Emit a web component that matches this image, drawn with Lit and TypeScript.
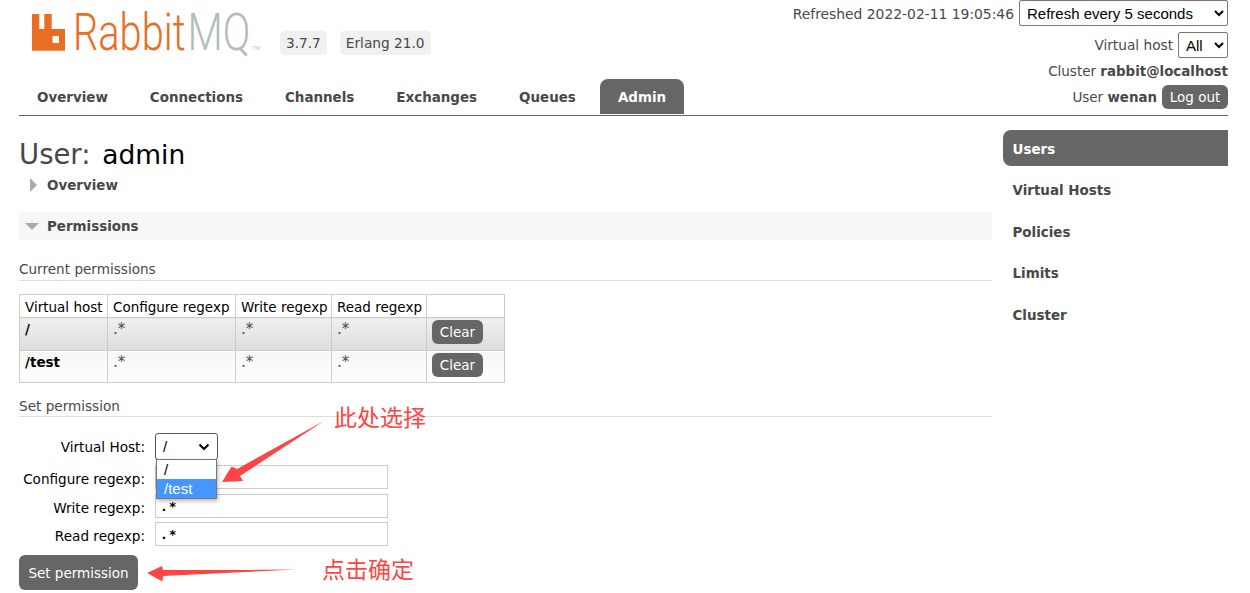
import { LitElement, html, css, svg } from "lit";
import { customElement } from "lit/decorators.js";

const tabs = ["Overview", "Connections", "Channels", "Exchanges", "Queues", "Admin"];
const side = ["Users", "Virtual Hosts", "Policies", "Limits", "Cluster"];
const perms = ["/", "/test"];

const logo = svg`<svg class="logo" width="240" height="64" viewBox="0 -14 240 64">
  <path fill="#e96d24" fill-rule="evenodd" d="M0 0h7.3v15h5V0h7.4v15H33v21.7H0zM20.5 22v7h6.5v-7z"/>
  <text transform="translate(41 36) scale(.78 1)" font-family="Roboto" font-weight="300" font-size="51" fill="#e96d24">Rabbit</text>
  <text transform="translate(155.5 36) scale(.8 1)" font-family="Roboto" font-weight="300" font-size="51" fill="#b2bdb9">MQ</text>
  <text x="221" y="36" font-family="Liberation Sans" font-size="5" fill="#b9c2bf">TM</text>
</svg>`;

@customElement("app-root")
export class AppRoot extends LitElement {
  static styles = css`
    :host { display: block; height: 593px; overflow: hidden; position: relative; background: #fff; color: #484848; font: 13.5px "DejaVu Sans", Verdana, sans-serif; }
    b { font-size: 13.4px; }
    .page { padding: 0 22px 0 19px; }
    header { display: flex; justify-content: space-between; border-bottom: 1px solid #666; height: 115px; }
    .left { display: flex; flex-direction: column; justify-content: space-between; }
    .brand { display: flex; padding: 0 0 0 13px; }
    .logo { display: block; }
    .badges { display: flex; gap: 13px; margin: 31px 0 0 8px; }
    .badge { background: #f0f0f0; border-radius: 5px; padding: 0 6px; height: 24px; line-height: 24px; font-size: 13.7px; }
    nav { display: flex; gap: 6px; padding-bottom: 1px; }
    nav a { padding: 0 18px; height: 35px; line-height: 38px; font-weight: 700; font-size: 13.45px; border-radius: 8px 8px 0 0; }
    nav a.on { background: #666; color: #fff; }
    .right { display: flex; flex-direction: column; align-items: flex-end; }
    .r { display: flex; align-items: center; justify-content: flex-end; gap: 5px; }
    .r1 { height: 26px; font-size: 13.87px; }
    .r1 span { padding-top: 2px; }
    .r2 { height: 26px; margin-top: 6px; font-size: 13.7px; }
    .r3 { margin-top: 3px; height: 20px; }
    .r4 { margin-top: 4px; height: 24px; gap: 5px; }
    select.native { font: 15px "Liberation Sans", Arial, sans-serif; background: #fff; color: #000; border: 1px solid #767676; border-radius: 2px; height: 26px; padding: 0 3px; }
    .refresh { width: 209px; }
    .vh { width: 50px; }
    .btn { background: #666; color: #fff; border-radius: 6px; display: inline-block; text-align: center; }
    .logout { width: 66px; height: 24px; line-height: 24px; }
    .body { display: flex; gap: 11px; }
    main { width: 973px; }
    h1 { margin: 20px 0 0; font-size: 27.5px; font-weight: 400; line-height: 36px; }
    h1 b { font-size: 26.5px; font-weight: 400; color: #000; margin-left: 3px; }
    .sec { display: flex; align-items: center; font-weight: 700; font-size: 13.45px; height: 28px; }
    .ov { margin-top: -2px; }
    .ov i { width: 0; height: 0; border-left: 7px solid #aaa; border-top: 7px solid transparent; border-bottom: 7px solid transparent; margin: 0 0 0 11px; }
    .ov span { margin-left: 10px; }
    .perm { background: #f7f7f7; margin-top: 13px; }
    .perm i { width: 0; height: 0; border-top: 7px solid #aaa; border-left: 7px solid transparent; border-right: 7px solid transparent; margin-left: 6px; }
    .perm span { margin-left: 8px; }
    h3 { margin: 0; font-size: 13.6px; font-weight: 400; line-height: 21px; border-bottom: 1px solid #ddd; }
    .cur { margin-top: 19px; }
    table { border-collapse: collapse; margin-top: 13px; table-layout: fixed; width: 485px; color: #000; }
    col.c1 { width: 88px; } col.c2 { width: 128px; } col.c3 { width: 96px; } col.c4 { width: 95px; } col.c5 { width: 78px; }
    td, th { border: 1px solid #ccc; padding: 0 5px; font-weight: 400; text-align: left; vertical-align: top; }
    thead th { height: 20px; padding-top: 2px; line-height: 20px; white-space: nowrap; }
    tbody td { height: 32px; line-height: 23px; color: #484848; font-size: 15px; }
    tbody th { line-height: 23px; font-weight: 700; color: #000; }
    tr.b td { height: 31px; }
    tr.a > * { background: linear-gradient(#f0f0f0, #dcdcdc); }
    tr.b > * { background: linear-gradient(#f6f6f6, #fff); }
    .clear { width: 51px; height: 24px; line-height: 25px; margin-top: 2px; font-size: 13.5px; }
    .set { margin-top: 13px; line-height: 20px; }
    form { margin-top: 16px; position: relative; }
    .row { display: flex; align-items: center; }
    .row label { width: 126px; text-align: right; color: #000; margin-right: 10px; font-size: 13.6px; }
    .row.i label { padding-top: 3px; }
    .row input { width: 233px; height: 24px; box-sizing: border-box; border: 1px solid #ccc; padding: 0 4px; font: 700 13px "DejaVu Sans Mono", monospace; letter-spacing: 1px; color: #000; outline: none; background: #fff; }
    .row.f { height: 27px; margin-bottom: 5px; }
    .row.i { height: 24px; margin-bottom: 5px; }
    .row.w { margin-bottom: 4px; }
    .row.l { margin-bottom: 9px; }
    .fake { width: 63px; height: 27px; box-sizing: border-box; border: 1px solid #555; border-radius: 3px; display: flex; align-items: center; justify-content: space-between; padding: 0 7px; color: #000; font: 15px "Liberation Sans", sans-serif; background: #fff; }
    .popup { position: absolute; left: 137px; top: 26px; width: 61px; box-sizing: border-box; border: 1px solid #767676; background: #fff; color: #000; font: 15px "Liberation Sans", sans-serif; z-index: 3; box-shadow: 1px 2px 4px rgba(0,0,0,.3); }
    .popup div { height: 19px; line-height: 19px; padding-left: 7px; }
    .popup .sel { background: #4596ff; color: #fff; }
    .submit { width: 119px; height: 35px; line-height: 36px; }
    aside { width: 225px; padding-top: 14px; font-weight: 700; font-size: 13.45px; }
    aside a { display: block; height: 36px; line-height: 39px; padding-left: 9.5px; margin-bottom: 5.4px; }
    aside a.on { background: #666; color: #fff; border-radius: 8px 0 0 8px; }
    .note { position: absolute; color: #f44; font: 23px "Noto Sans CJK SC", sans-serif; line-height: 30px; z-index: 5; }
    .n1 { left: 334px; top: 401px; }
    .n2 { left: 322px; top: 553px; }
    .arrows { position: absolute; left: 0; top: 0; z-index: 4; pointer-events: none; }
  `;

  render() {
    return html`<div class="page">
      <header>
        <div class="left">
          <div class="brand">${logo}<div class="badges"><span class="badge">3.7.7</span><span class="badge">Erlang 21.0</span></div></div>
          <nav>${tabs.map((t) => html`<a class=${t === "Admin" ? "on" : ""}>${t}</a>`)}</nav>
        </div>
        <div class="right">
          <div class="r r1"><span>Refreshed 2022-02-11 19:05:46</span><select class="native refresh"><option>Refresh every 5 seconds</option></select></div>
          <div class="r r2"><span>Virtual host</span><select class="native vh"><option>All</option></select></div>
          <div class="r r3"><span>Cluster <b>rabbit@localhost</b></span></div>
          <div class="r r4"><span>User <b>wenan</b></span><span class="btn logout">Log out</span></div>
        </div>
      </header>
      <div class="body">
        <main>
          <h1>User: <b>admin</b></h1>
          <div class="sec ov"><i></i><span>Overview</span></div>
          <div class="sec perm"><i></i><span>Permissions</span></div>
          <h3 class="cur">Current permissions</h3>
          <table>
            <colgroup><col class="c1" /><col class="c2" /><col class="c3" /><col class="c4" /><col class="c5" /></colgroup>
            <thead><tr><th>Virtual host</th><th>Configure regexp</th><th>Write regexp</th><th>Read regexp</th><th></th></tr></thead>
            <tbody>
              ${perms.map((p, i) => html`<tr class=${i ? "b" : "a"}><th>${p}</th><td>.*</td><td>.*</td><td>.*</td><td><span class="btn clear">Clear</span></td></tr>`)}
            </tbody>
          </table>
          <h3 class="set">Set permission</h3>
          <form>
            <div class="row f"><label>Virtual Host:</label><div class="fake"><span>/</span><svg width="12" height="8" viewBox="0 0 12 8"><path d="M1.5 1.5 6 6l4.5-4.5" fill="none" stroke="#000" stroke-width="2"/></svg></div></div>
            <div class="popup"><div>/</div><div class="sel">/test</div></div>
            <div class="row i"><label>Configure regexp:</label><input value=".*" /></div>
            <div class="row i w"><label>Write regexp:</label><input value=".*" /></div>
            <div class="row i l"><label>Read regexp:</label><input value=".*" /></div>
            <span class="btn submit">Set permission</span>
          </form>
        </main>
        <aside>${side.map((s) => html`<a class=${s === "Users" ? "on" : ""}>${s}</a>`)}</aside>
      </div>
    </div>
    <svg class="arrows" width="1250" height="593" viewBox="0 0 1250 593">
      <path fill="#f44" d="M324 421 237 469 231.5 466.5 222 482 243 481 240 476Z"/>
      <path fill="#f44" d="M297 569.5 163 570 162 566 147 573 162.5 581.5 163 576Z"/>
    </svg>
    <div class="note n1">此处选择</div>
    <div class="note n2">点击确定</div>`;
  }
}
